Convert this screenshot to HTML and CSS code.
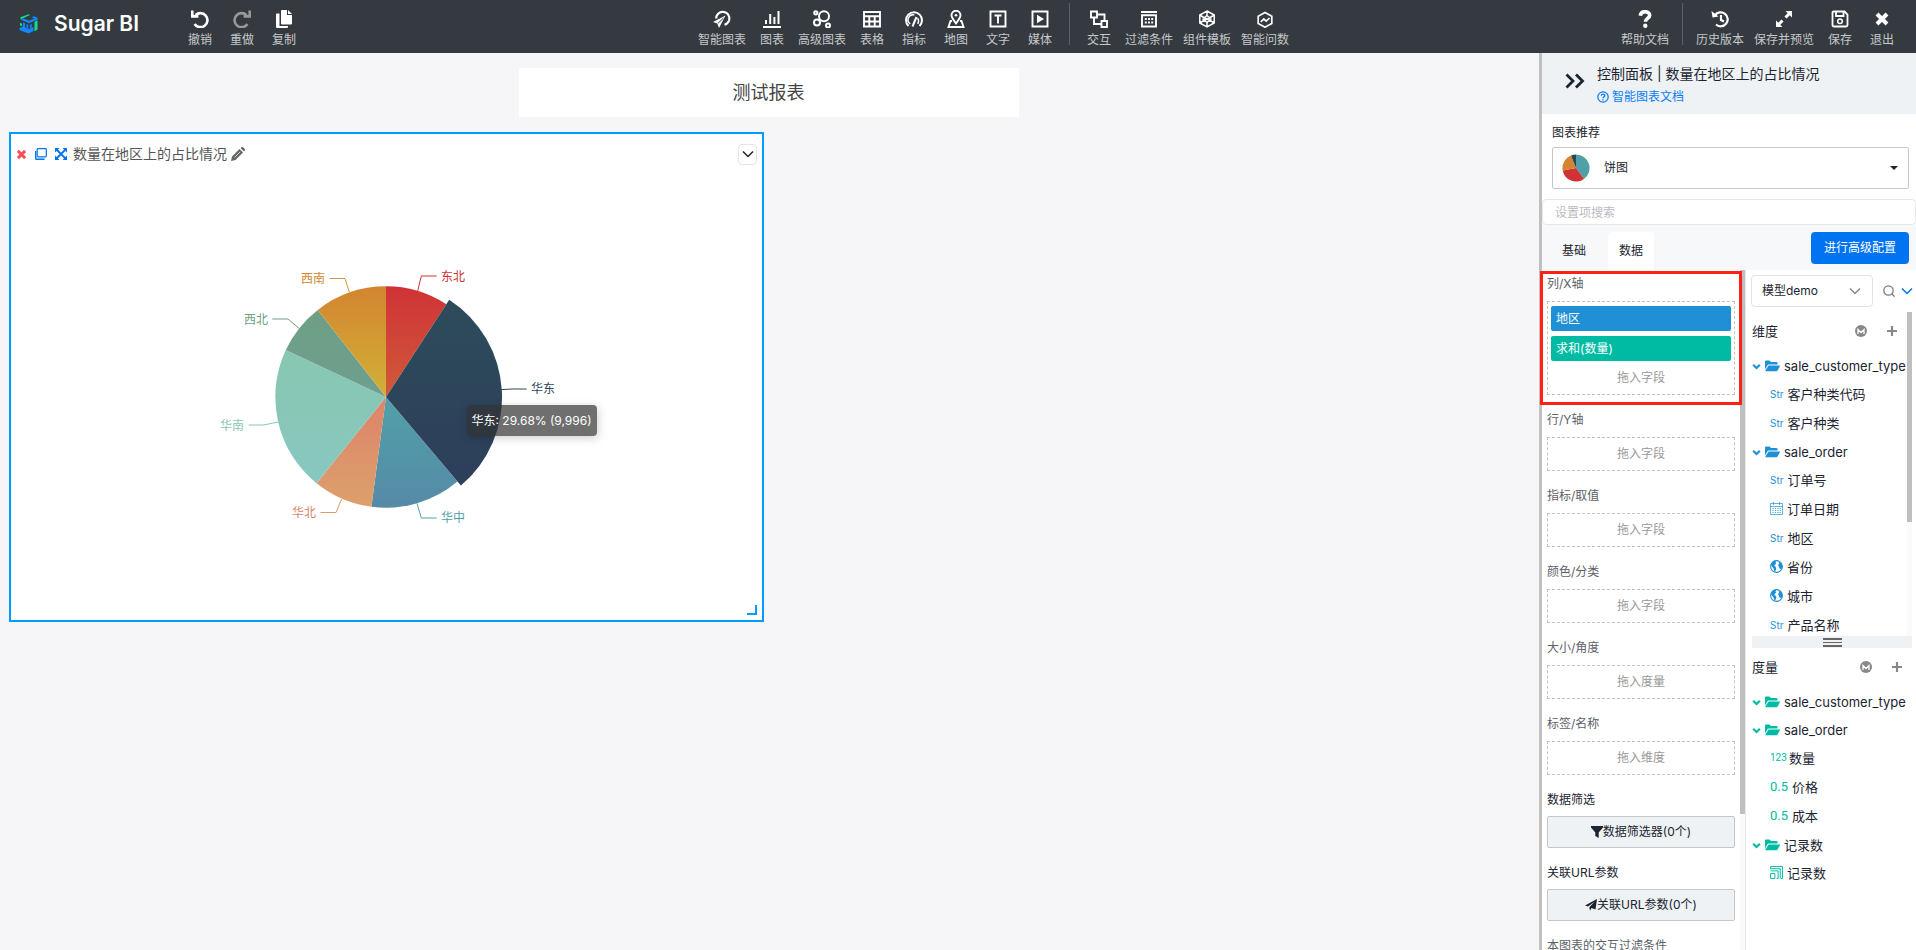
FILE: index.html
```html
<!DOCTYPE html>
<html lang="zh-CN">
<head>
<meta charset="utf-8">
<title>Sugar BI</title>
<link rel="stylesheet" href="styles.css">
</head>
<body>
<svg class="sprite" aria-hidden="true">
  <symbol id="undo" viewBox="0 0 18 18"><path d="M4.500 5.200A7 7 0 1 1 3.600 14" fill="none" stroke="currentColor" stroke-width="2.600"/><path d="M0 0.500h2.600v4.500h4.800v2.800H0z" fill="currentColor"/></symbol>
  <symbol id="copy" viewBox="0 0 18 18"><path d="M7 0h5v5h5v8.500a1 1 0 0 1-1 1H7a1 1 0 0 1-1-1V1a1 1 0 0 1 1-1zM13 0l4 4h-4zM2 3.500h2.500V16H13v1a1 1 0 0 1-1 1H2a1 1 0 0 1-1-1V4.500a1 1 0 0 1 1-1z" fill="currentColor"/></symbol>
  <symbol id="smart" viewBox="0 0 18 18"><path d="M3.200 8.500a6.600 6.600 0 1 1 8.300 6.300" fill="none" stroke="currentColor" stroke-width="2.200"/><path d="M12.500 5.500 0 12l4.300 1.500 1.700 4.500z" fill="currentColor"/><path d="M10.500 8 5 13.300" stroke="#343a40"/></symbol>
  <symbol id="bars" viewBox="0 0 18 18"><path d="M0 17h18M3 14V10M7.200 14V4M11.400 14V7M15.500 14V1" fill="none" stroke="currentColor" stroke-width="2"/></symbol>
  <symbol id="bubbles" viewBox="0 0 18 18"><g fill="none" stroke="currentColor" stroke-width="2"><circle cx="11" cy="6.200" r="5"/><circle cx="2.800" cy="2.800" r="1.600"/><circle cx="4" cy="12.500" r="3"/><circle cx="15" cy="15.500" r="2"/></g></symbol>
  <symbol id="grid" viewBox="0 0 18 18"><path d="M1 2h16v14.500H1zM1 6.200h16M1 11.500h16M6.300 6v10M11.700 6v10" fill="none" stroke="currentColor" stroke-width="1.900"/></symbol>
  <symbol id="gauge" viewBox="0 0 18 18"><path d="M3.500 16A8 8 0 1 1 14.500 16M7.500 16.500 11.500 7" fill="none" stroke="currentColor" stroke-width="2"/><path d="M5.300 14a5 5 0 0 1 4-9M12.700 8a6 6 0 0 1 0 6" fill="none" stroke="currentColor" stroke-width="1.400"/></symbol>
  <symbol id="map" viewBox="0 0 18 18"><path d="M9 13.500C6 9.500 4.500 7.500 4.500 5.300a4.500 4.500 0 0 1 9 0C13.500 7.500 12 9.500 9 13.500zM5 11H3.500L1.500 17h15l-2-6H13" fill="none" stroke="currentColor" stroke-width="1.900"/><circle cx="9" cy="5.200" r="1.300" fill="currentColor"/></symbol>
  <symbol id="text" viewBox="0 0 18 18"><path d="M1.500 1.500h15v15h-15zM5.500 5.500h7M9 5.500v8" fill="none" stroke="currentColor" stroke-width="1.900"/></symbol>
  <symbol id="play" viewBox="0 0 18 18"><path d="M1.500 1.500h15v15h-15z" fill="none" stroke="currentColor" stroke-width="1.900"/><path d="M6 4.800 13 9l-7 4.200z" fill="currentColor"/></symbol>
  <symbol id="link" viewBox="0 0 18 18"><path d="M1 1.500h6v6H1zM11.500 11h5.500v6h-5.500zM7 4.500h7.500V11M4 7.500V14h7.500" fill="none" stroke="currentColor" stroke-width="1.900"/></symbol>
  <symbol id="filterbox" viewBox="0 0 18 18"><path d="M1 2h16M2 5.200h14v11.300H2z" fill="none" stroke="currentColor" stroke-width="1.900"/><path d="M4.800 9h8.400M4.800 12.500h8.400" stroke="currentColor" stroke-width="1.900" stroke-dasharray="2 1.200"/></symbol>
  <symbol id="cube" viewBox="0 0 18 18"><path d="M9 1l7.200 4v8L9 17l-7.200-4V5zM9 1v4.500M9 12.500V17M1.800 5 9 9.500 16.200 5M1.800 13 9 8.500 16.200 13M9 5.500l4 3.500-4 3.500L5 9z" fill="none" stroke="currentColor" stroke-width="1.500"/></symbol>
  <symbol id="ask" viewBox="0 0 18 18"><path d="M9 2.500l6.800 3.700v7.300L9 17.200l-6.800-3.700V6.200zM4.800 12l3-3 2.400 2.200L13.500 8" fill="none" stroke="currentColor" stroke-width="1.700"/></symbol>
  <symbol id="question" viewBox="0 0 18 18"><path d="M4.300 5.800C4.700 2.900 6.800 1.700 9 1.700c2.700 0 4.700 1.400 4.700 3.500 0 3.300-4.300 3-4.300 6.600" fill="none" stroke="currentColor" stroke-width="3.600"/><circle cx="9.300" cy="15.800" r="2.200" fill="currentColor"/></symbol>
  <symbol id="history" viewBox="0 0 18 18"><path d="M4 5.200A7 7 0 1 1 5 14.500M10 5v5l3 1.500" fill="none" stroke="currentColor" stroke-width="2.200"/><path d="M0.500 1 1.500 7.500l6-1z" fill="currentColor"/></symbol>
  <symbol id="preview" viewBox="0 0 18 18"><path d="M10.500 1H17v6.500zM1 10.500V17h6.500z" fill="currentColor"/><path d="M15 3l-4.500 4.500M7.500 10.500 3 15" stroke="currentColor" stroke-width="3"/></symbol>
  <symbol id="save" viewBox="0 0 18 18"><path d="M2.500 1.500h11l3 3v10.500a1.500 1.500 0 0 1-1.500 1.500H3A1.500 1.500 0 0 1 1.500 15V2.500a1 1 0 0 1 1-1zM5 1.500V6h7.500V1.500" fill="none" stroke="currentColor" stroke-width="1.800"/><circle cx="9" cy="11.300" r="2.300" fill="none" stroke="currentColor" stroke-width="1.500"/></symbol>
  <symbol id="close" viewBox="0 0 18 18"><path d="M4 4l10 10M14 4 4 14" stroke="currentColor" stroke-width="4"/></symbol>
  <symbol id="expand" viewBox="0 0 12 12"><path d="M0 0h4.500L0 4.500zM12 0v4.500L7.500 0zM0 12V7.500L4.500 12zM12 12H7.500L12 7.500z" fill="currentColor"/><path d="M1.500 1.500l9 9M10.500 1.500l-9 9" stroke="currentColor" stroke-width="1.800"/></symbol>
  <symbol id="layers" viewBox="0 0 12 12"><path d="M3 .7h7.500a.8.800 0 0 1 .8.800V8a.8.800 0 0 1-.8.800H3a.8.800 0 0 1-.8-.8V1.500A.8.800 0 0 1 3 .7z" fill="none" stroke="currentColor" stroke-width="1.200"/><path d="M.7 3v7.500a.8.800 0 0 0 .8.800H9.500" fill="none" stroke="currentColor" stroke-width="1.400"/></symbol>
  <symbol id="pencil" viewBox="0 0 14 14"><path d="M0 14l1-4.500L8.500 2 12 5.500 4.500 13zM9.500 1l.7-.6a1.500 1.500 0 0 1 2 0L13.600 1.800a1.500 1.500 0 0 1 0 2L13 4.500z" fill="currentColor"/><path d="M3.500 10.500 9 5" stroke="#fff" stroke-width=".7"/></symbol>
  <symbol id="chev" viewBox="0 0 12 12"><path d="M1 3.500 6 8.500l5-5" fill="none" stroke="currentColor" stroke-width="1.500"/></symbol>
  <symbol id="chevbold" viewBox="0 0 10 10"><path d="M1.300 3 5 6.700 8.700 3" fill="none" stroke="currentColor" stroke-width="2.400"/></symbol>
  <symbol id="dbl" viewBox="0 0 20 16"><path d="M1.500 1.500 8 8l-6.500 6.500M11 1.500 17.500 8 11 14.500" fill="none" stroke="currentColor" stroke-width="2.800"/></symbol>
  <symbol id="help" viewBox="0 0 12 12"><circle cx="6" cy="6" r="5.200" fill="none" stroke="currentColor" stroke-width="1.200"/><path d="M4.200 4.800C4.300 2.500 7.800 2.500 7.800 4.600 7.800 5.900 6 5.900 6 7.200M6 8.200v1.300" fill="none" stroke="currentColor" stroke-width="1.300"/></symbol>
  <symbol id="folder" viewBox="0 0 15 12"><path d="M0 9.500V1.500A1 1 0 0 1 1 .5h3.500L6 2h5.500a1 1 0 0 1 1 1v1.500H4a2 2 0 0 0-1.700 1z" fill="currentColor"/><path d="M4 5.500h10.500c.5 0 .6.400.4.800l-2.300 4.200a1.500 1.500 0 0 1-1.200.8H.8c-.5 0-.6-.4-.4-.8L3 6.200A1.200 1.200 0 0 1 4 5.500z" fill="currentColor"/></symbol>
  <symbol id="cal" viewBox="0 0 13 13"><path d="M.5 1.500h12v11H.5zM.5 4.500h12M3.500 0v3M9.500 0v3" fill="none" stroke="currentColor" stroke-width=".7"/><path d="M2.500 6.500h8.500M2.500 8.500h8.500M2.500 10.500h8.500" stroke="currentColor" stroke-width=".8" stroke-dasharray="1.200 1.200"/></symbol>
  <symbol id="globe" viewBox="0 0 13 13"><circle cx="6.500" cy="6.500" r="5.900" fill="#fff" stroke="currentColor" stroke-width="1.100"/><path d="M.8 5C1.500 2 4 .5 6.500.6L5.500 2.500l.8 1-2 1.800L6 7.500l.3 1.500L5 12C4 11 4 9.500 3.500 8.500zM8.300 1l3.500 3 .6 3-1.200 2.500L9.500 8.500l-.7-2L8 5l1.200-1.500z" fill="currentColor"/></symbol>
  <symbol id="em" viewBox="0 0 12 12"><circle cx="6" cy="6" r="6" fill="currentColor"/><path d="M3 9V4.500l3 3 3-3V9" fill="none" stroke="#fff" stroke-width="1.300"/></symbol>
  <symbol id="plus" viewBox="0 0 10 10"><path d="M5 0v10M0 5h10" stroke="currentColor" stroke-width="2.200"/></symbol>
  <symbol id="search" viewBox="0 0 12 12"><circle cx="5.500" cy="5.500" r="4.700" fill="none" stroke="currentColor" stroke-width="1.200"/><path d="M9 9l2.700 2.700" stroke="currentColor" stroke-width="1.200"/></symbol>
  <symbol id="funnel" viewBox="0 0 12 12"><path d="M0 0h12v1.500L7.700 6.500v5.500L4.300 10V6.500L0 1.500z" fill="currentColor"/></symbol>
  <symbol id="plane" viewBox="0 0 12 12"><path d="M12 0 10.500 10.500 6.500 9 5 11.800 4.300 8.200 9.500 2.700 3 7.500 0 6.500z" fill="currentColor"/></symbol>
  <symbol id="count" viewBox="0 0 12 12"><path d="M.5 2.500v-2h11v11h-1.500M.5 4.500h7v7H6M.5 7h4v4.500h-4zM.5 2.500h9v9" fill="none" stroke="currentColor" stroke-width=".9"/></symbol>
</svg>

<header class="topbar">
  <a class="brand" href="#">
    <svg class="logo" viewBox="0 0 20 20" aria-hidden="true"><path d="M1.500 5.200v-2L9.500.2l1.500.8L4.500 4z" fill="#0fe28a"/><path d="M1 8.800l2 1v2.500l-2-1z" fill="#0fe28a"/><path d="M15.500 8 18.500 6.300V15.500l-3 1.800z" fill="#0fe28a"/><path d="M1.500 5.500 4 4.300l6 2.400 5.500-2.200-3-1.200L15 2.300l3.500 1.500v2L10 9.300z" fill="#1188ff"/><path d="M.5 14l3.500-1.500 6 2.500 4.500-2v4L9.500 19.600.5 16zM4 8.500l2 .8v4L4 12.500zM7.500 10l1.800.7v3.500l-1.800-.7zM11 10.700l1.800-.7v3.500l-1.800.7z" fill="#1188ff"/></svg>
    <span>Sugar BI</span>
  </a>
  <nav class="tools">
    <button class="tool"><svg><use href="#undo"/></svg>撤销</button>
    <button class="tool off"><svg class="flip"><use href="#undo"/></svg>重做</button>
    <button class="tool"><svg><use href="#copy"/></svg>复制</button>
  </nav>
  <nav class="tools mid">
    <button class="tool"><svg><use href="#smart"/></svg>智能图表</button>
    <button class="tool"><svg><use href="#bars"/></svg>图表</button>
    <button class="tool"><svg><use href="#bubbles"/></svg>高级图表</button>
    <button class="tool"><svg><use href="#grid"/></svg>表格</button>
    <button class="tool"><svg><use href="#gauge"/></svg>指标</button>
    <button class="tool"><svg><use href="#map"/></svg>地图</button>
    <button class="tool"><svg><use href="#text"/></svg>文字</button>
    <button class="tool"><svg><use href="#play"/></svg>媒体</button>
    <span class="rule"></span>
    <button class="tool"><svg><use href="#link"/></svg>交互</button>
    <button class="tool"><svg><use href="#filterbox"/></svg>过滤条件</button>
    <button class="tool"><svg><use href="#cube"/></svg>组件模板</button>
    <button class="tool"><svg><use href="#ask"/></svg>智能问数</button>
  </nav>
  <nav class="tools">
    <button class="tool"><svg><use href="#question"/></svg>帮助文档</button>
    <span class="rule"></span>
    <button class="tool"><svg><use href="#history"/></svg>历史版本</button>
    <button class="tool"><svg><use href="#preview"/></svg>保存并预览</button>
    <button class="tool"><svg><use href="#save"/></svg>保存</button>
    <button class="tool"><svg><use href="#close"/></svg>退出</button>
  </nav>
</header>

<div class="work">
  <main class="canvas">
    <h1 class="report-title">测试报表</h1>
    <section class="card">
      <div class="card-head">
        <button class="ic del" aria-label="删除"><svg><use href="#close"/></svg></button>
        <button class="ic" aria-label="复制"><svg><use href="#layers"/></svg></button>
        <button class="ic" aria-label="全屏"><svg><use href="#expand"/></svg></button>
        <h2>数量在地区上的占比情况</h2>
        <button class="ic pen" aria-label="编辑"><svg><use href="#pencil"/></svg></button>
        <button class="more" aria-label="更多"><svg><use href="#chev"/></svg></button>
      </div>
      <div class="chart">
        <svg class="pie" viewBox="-375 -223 751 446" role="img" aria-label="饼图">
          <defs>
            <linearGradient id="g1" x2="0" y2="1"><stop stop-color="#d03236"/><stop offset="1" stop-color="#cf5b39"/></linearGradient>
            <linearGradient id="g2" x2="0" y2="1"><stop stop-color="#2d4c5a"/><stop offset="1" stop-color="#2d3e5a"/></linearGradient>
            <linearGradient id="g3" x2="0" y2="1"><stop stop-color="#50a0a8"/><stop offset="1" stop-color="#568aa8"/></linearGradient>
            <linearGradient id="g4" x2="0" y2="1"><stop stop-color="#dd836b"/><stop offset="1" stop-color="#dda06b"/></linearGradient>
            <linearGradient id="g5" x2="0" y2="1"><stop stop-color="#88c7b0"/><stop offset="1" stop-color="#88c7c0"/></linearGradient>
            <linearGradient id="g6" x2="0" y2="1"><stop stop-color="#6e9f84"/><stop offset="1" stop-color="#6e9f90"/></linearGradient>
            <linearGradient id="g7" x2="0" y2="1"><stop stop-color="#d38530"/><stop offset="1" stop-color="#d1b137"/></linearGradient>
          </defs>
          <path fill="url(#g1)" d="M0 0V-110.700A110.700 110.700 0 0 1 60.300-92.800z"/>
          <path fill="url(#g3)" d="M0 0L71.500 84.500A110.700 110.700 0 0 1-14.600 109.700z"/>
          <path fill="url(#g4)" d="M0 0L-14.600 109.700A110.700 110.700 0 0 1-69.500 86.200z"/>
          <path fill="url(#g5)" d="M0 0L-69.500 86.200A110.700 110.700 0 0 1-100.200-47z"/>
          <path fill="url(#g6)" d="M0 0L-100.200-47A110.700 110.700 0 0 1-68.300-87.100z"/>
          <path fill="url(#g7)" d="M0 0L-68.300-87.100A110.700 110.700 0 0 1 0-110.700z"/>
          <path fill="url(#g2)" d="M0 0L63.200-97.300A116 116 0 0 1 74.900 88.600z"/>
          <g class="lines">
            <path stroke="#d03236" d="M31.600-105.700 35.300-121H50.600"/>
            <path stroke="#2d4558" d="M115.300-7.400 126-8H140.600"/>
            <path stroke="#50a0a8" d="M31 106.300 35.300 121H50.600"/>
            <path stroke="#dd9a6b" d="M-44.400 102-50 115.500H-65.400"/>
            <path stroke="#88c7b0" d="M-108 25-122.400 28H-137.400"/>
            <path stroke="#6e9f84" d="M-87-68.700-98-78H-113.700"/>
            <path stroke="#d39a30" d="M-36.700-105-41-118.500H-56.400"/>
          </g>
          <g class="names">
            <text x="55" y="-116" fill="#d03236">东北</text>
            <text x="145" y="-4" fill="#2d4558">华东</text>
            <text x="55" y="125" fill="#50a0a8">华中</text>
            <text x="-94" y="120" fill="#dd836b">华北</text>
            <text x="-166" y="33" fill="#88c7b0">华南</text>
            <text x="-142" y="-73" fill="#6e9f84">西北</text>
            <text x="-85" y="-114" fill="#d38530">西南</text>
          </g>
        </svg>
        <div class="tip">华东: 29.68% (9,996)</div>
      </div>
      <span class="grip"></span>
    </section>
  </main>

  <aside class="panel">
    <div class="panel-head">
      <button class="fold" aria-label="收起"><svg><use href="#dbl"/></svg></button>
      <div>
        <h2>控制面板 | 数量在地区上的占比情况</h2>
        <a href="#"><svg><use href="#help"/></svg>智能图表文档</a>
      </div>
    </div>
    <div class="rec">
      <label for="kind">图表推荐</label>
      <div class="kind">
        <svg class="mini" viewBox="-14 -14 28 28" aria-hidden="true"><path fill="#50a0a8" d="M0 0V-13.500A13.500 13.500 0 0 1 8 10.900z"/><path fill="#d03236" d="M0 0L8 10.900A13.500 13.500 0 0 1-13.300 2.500z"/><path fill="#d38530" d="M0 0L-13.300 2.500A13.500 13.500 0 0 1-5-12.500z"/><path fill="#2d4558" d="M0 0L-5-12.500A13.500 13.500 0 0 1 0-13.500z"/></svg>
        <select id="kind"><option>饼图</option></select>
        <span class="caret"></span>
      </div>
    </div>
    <input class="find" type="text" placeholder="设置项搜索" aria-label="设置项搜索">
    <div class="tabs">
      <button class="tab">基础</button>
      <button class="tab on">数据</button>
      <button class="primary">进行高级配置</button>
    </div>
    <div class="cols">
      <div class="fields">
        <div class="field-list">
          <section><h3>列/X轴</h3><div class="drop full"><span class="chip">地区</span><span class="chip green">求和(数量)</span><p>拖入字段</p></div></section>
          <section><h3>行/Y轴</h3><div class="drop">拖入字段</div></section>
          <section><h3>指标/取值</h3><div class="drop">拖入字段</div></section>
          <section><h3>颜色/分类</h3><div class="drop">拖入字段</div></section>
          <section><h3>大小/角度</h3><div class="drop">拖入度量</div></section>
          <section><h3>标签/名称</h3><div class="drop">拖入维度</div></section>
          <section class="act"><h3>数据筛选</h3><button><svg><use href="#funnel"/></svg>数据筛选器(0个)</button></section>
          <section class="act"><h3>关联URL参数</h3><button><svg><use href="#plane"/></svg>关联URL参数(0个)</button></section>
          <section><h3>本图表的交互过滤条件</h3></section>
        </div>
        <div class="bar"><i></i></div>
        <div class="mark"></div>
      </div>
      <div class="model">
        <div class="model-top">
          <div class="model-pick"><select aria-label="模型"><option>模型demo</option></select><svg><use href="#chev"/></svg></div>
          <button class="ic find-btn" aria-label="搜索"><svg><use href="#search"/></svg></button>
          <button class="ic drop-btn" aria-label="展开"><svg><use href="#chev"/></svg></button>
        </div>
        <div class="dims">
          <div class="tree">
            <div class="tree-head"><h3>维度</h3><button class="ic" aria-label="计算"><svg><use href="#em"/></svg></button><button class="ic add" aria-label="添加"><svg><use href="#plus"/></svg></button></div>
            <ul>
              <li class="dir"><svg class="tw"><use href="#chevbold"/></svg><svg class="fd"><use href="#folder"/></svg>sale_customer_type</li>
              <li><b>Str</b>客户种类代码</li>
              <li><b>Str</b>客户种类</li>
              <li class="dir"><svg class="tw"><use href="#chevbold"/></svg><svg class="fd"><use href="#folder"/></svg>sale_order</li>
              <li><b>Str</b>订单号</li>
              <li><svg class="lf"><use href="#cal"/></svg>订单日期</li>
              <li><b>Str</b>地区</li>
              <li><svg class="lf"><use href="#globe"/></svg>省份</li>
              <li><svg class="lf"><use href="#globe"/></svg>城市</li>
              <li><b>Str</b>产品名称</li>
            </ul>
          </div>
          <div class="bar short"><i></i></div>
        </div>
        <div class="split"><span></span></div>
        <div class="tree measures">
          <div class="tree-head"><h3>度量</h3><button class="ic" aria-label="计算"><svg><use href="#em"/></svg></button><button class="ic add" aria-label="添加"><svg><use href="#plus"/></svg></button></div>
          <ul>
            <li class="dir"><svg class="tw"><use href="#chevbold"/></svg><svg class="fd"><use href="#folder"/></svg>sale_customer_type</li>
            <li class="dir"><svg class="tw"><use href="#chevbold"/></svg><svg class="fd"><use href="#folder"/></svg>sale_order</li>
            <li class="num"><b class="int">123</b>数量</li>
            <li><b class="dec">0.5</b>价格</li>
            <li><b class="dec">0.5</b>成本</li>
            <li class="dir"><svg class="tw"><use href="#chevbold"/></svg><svg class="fd"><use href="#folder"/></svg>记录数</li>
            <li><svg class="lf"><use href="#count"/></svg>记录数</li>
          </ul>
        </div>
      </div>
    </div>
  </aside>
</div>
</body>
</html>
```
FILE: styles.css
```css
* { box-sizing: border-box; }
body {
  margin: 0;
  height: 100vh;
  display: flex;
  flex-direction: column;
  overflow: hidden;
  background: #f6f6f9;
  color: #1b2430;
  font: 12px/18px Inter, "Noto Sans CJK SC", sans-serif;
}
h1, h2, h3, p, ul { margin: 0; padding: 0; font-weight: 400; list-style: none; }
button, input, select { font: inherit; color: inherit; margin: 0; }
button { padding: 0; border: 0; background: none; cursor: pointer; }
select { appearance: none; }
a { text-decoration: none; }
svg { display: block; flex: none; }
.sprite { position: absolute; width: 0; height: 0; }

.topbar {
  flex: none;
  height: 53px;
  display: flex;
  justify-content: space-between;
  padding: 0 13px 0 19px;
  background: #343a40;
  color: #fff;
}
.brand { display: flex; align-items: center; gap: 15px; width: 160px; padding-bottom: 5px; color: #fff; font-size: 21px; font-weight: 600; }
.logo { width: 20px; height: 20px; }
.tools { display: flex; }
.mid { flex: 1; justify-content: center; padding-left: 66px; }
.tool {
  min-width: 42px;
  padding: 7px 5px 0;
  display: flex;
  flex-direction: column;
  align-items: center;
  gap: 3px;
  line-height: 18px;
  white-space: nowrap;
  color: #c6c8ca;
}
.tool svg { width: 18px; height: 18px; margin-top: 3px; color: #fff; }
.tool.off svg { color: #999; }
.flip { transform: scaleX(-1); }
.rule { width: 1px; height: 42px; margin: 3px 8px 0; background: #5d6267; }

.work { flex: 1; min-height: 0; display: flex; }
.canvas { flex: 1; min-width: 0; padding: 15px 11px 15px 9px; }
.report-title {
  width: 500px;
  margin: 0 auto 15px;
  background: #fff;
  font-size: 18px;
  line-height: 49px;
  text-align: center;
  color: #444;
}
.card { position: relative; width: 755px; border: 2px solid #009cff; background: #fff; }
.card-head { display: flex; align-items: center; height: 40px; padding: 0 5px 0 2px; color: #0073f1; }
.card-head h2 { margin-left: 2px; font-size: 14px; line-height: 20px; color: #555; }
.ic { display: grid; place-items: center; width: 20px; height: 20px; }
.ic svg { width: 12px; height: 12px; }
.del { width: 16px; margin-right: 2px; color: #ff4d58; }
.del svg { width: 13px; height: 13px; }
.pen { margin-left: 1px; color: #666; }
.pen svg { width: 14px; height: 14px; }
.more { display: grid; place-items: center; width: 19px; height: 21px; margin-left: auto; border: 1px solid #e2e4e6; border-radius: 4px; color: #1b2430; }
.more svg { width: 12px; height: 12px; }
.chart { position: relative; }
.pie { width: 100%; }
.lines { fill: none; }
.names { font-size: 12px; }
.tip {
  position: absolute;
  left: calc(50% + 80px);
  top: calc(50% + 8px);
  padding: 0 5px;
  line-height: 31px;
  border-radius: 4px;
  background: rgba(50, 50, 50, .7);
  color: #fff;
  white-space: nowrap;
  box-shadow: 1px 2px 10px rgba(0, 0, 0, .2);
}
.grip { position: absolute; right: 5px; bottom: 5px; width: 10px; height: 10px; border: solid #009cff; border-width: 0 2px 2px 0; }

.panel { width: 377px; display: flex; flex-direction: column; border-left: 3px solid #c0c0c0; background: #fff; }
.panel-head { display: flex; align-items: flex-start; gap: 12px; height: 61px; padding: 10px 0 0 23px; background: #eef2f4; }
.panel-head h2 { font-size: 14px; line-height: 22px; }
.panel-head a { display: flex; align-items: center; gap: 3px; line-height: 24px; color: #0a7cf5; }
.panel-head a svg { width: 12px; height: 12px; }
.fold { padding-top: 10px; }
.fold svg { width: 20px; height: 16px; }
.rec { padding: 10px 7px 10px 10px; }
.rec label { display: block; margin-bottom: 5px; }
.kind { display: grid; align-items: center; }
.kind > * { grid-area: 1 / 1; }
.mini { width: 28px; height: 28px; margin-left: 10px; z-index: 1; }
.kind select { width: 100%; height: 42px; padding: 0 51px; border: 1px solid #c4c6c8; border-radius: 2px; background: #fff; }
.caret { justify-self: end; margin-right: 11px; border: solid transparent; border-width: 4px 4px 0; border-top-color: #1b2430; }
.find { flex: none; height: 26px; padding: 0 12px; border: 1px solid #e4e6e8; border-radius: 4px; outline: 0; background: #fff; }
.find::placeholder { color: #b8bbbf; opacity: 1; }
.tabs { display: flex; align-items: flex-end; gap: 11px; padding: 7px 7px 0 9px; background: #f6f8fa; }
.tab { height: 38px; padding: 0 11px; border-radius: 4px 4px 0 0; }
.tab.on { background: #fff; }
.primary { align-self: flex-start; height: 32px; margin-left: auto; padding: 0 13px; border-radius: 4px; background: #0073f1; color: #fff; }

.cols { flex: 1; min-height: 0; display: flex; }
.fields { position: relative; display: flex; width: 203px; }
.field-list { flex: 1; padding: 5px; overflow: hidden; }
.field-list section { margin-bottom: 16px; }
.field-list h3 { margin-bottom: 8px; color: #5c6167; font-size: 12px; line-height: 18px; }
.drop { border: 1px dashed #c4c4c4; line-height: 32px; text-align: center; color: #999; }
.full { display: grid; gap: 5px; padding: 4px 3px; }
.full p { line-height: 24px; }
.chip { padding: 0 5px; line-height: 25px; border-radius: 2px; background: #1f90d6; color: #fff; text-align: left; }
.green { background: #00bba4; }
.act h3 { margin-bottom: 7px; color: #1b2430; }
.field-list button { display: flex; align-items: center; justify-content: center; width: 100%; height: 32px; border: 1px solid #c4c6c8; border-radius: 2px; background: #eef2f4; }
.field-list button svg { width: 12px; height: 12px; }
.bar { width: 5px; background: #fafafa; }
.bar i { display: block; height: 80%; background: #bfbfbf; }
.mark { position: absolute; left: -2px; top: 1px; width: 202px; height: 134px; border: 3px solid #ff2116; pointer-events: none; }

.model { flex: 1; min-width: 0; display: flex; flex-direction: column; padding: 0 4px 0 6px; border-left: 1px solid #e8e8e8; }
.model-top { display: flex; align-items: center; height: 42px; margin: 0 -4px 0 -1px; }
.model-top > * { flex: none; }
.model-pick { display: grid; align-items: center; width: 122px; }
.model-pick > * { grid-area: 1 / 1; }
.model-pick select { width: 100%; height: 32px; padding: 0 10px; border: 1px solid #e0e3e6; border-radius: 4px; background: #fff; }
.model-pick svg { width: 12px; height: 12px; justify-self: end; margin-right: 12px; color: #888; pointer-events: none; }
.find-btn { margin-left: 6px; color: #777; }
.drop-btn { width: 16px; color: #0073f1; }
.dims { display: flex; height: 324px; }
.tree { flex: 1; min-width: 0; overflow: hidden; color: #1f90d6; }
.tree-head { display: flex; align-items: center; height: 40px; padding-bottom: 2px; color: #888; }
.tree-head h3 { flex: 1; font-size: 13px; color: #1b2430; }
.add { margin: 0 5px 0 11px; }
.add svg { width: 10px; height: 10px; }
.tree li { display: flex; align-items: center; gap: 4px; height: 29px; padding: 0 0 2px 18px; font-size: 13px; white-space: nowrap; color: #1b2430; }
.tree li.dir { height: 28px; padding: 0; }
.tree b { min-width: 13px; font: 10px Inter, sans-serif; color: #1f90d6; }
.tree li svg { color: #1f90d6; }
.tw { width: 9px; height: 9px; }
.fd { width: 15px; height: 12px; }
.lf { width: 13px; height: 13px; }
.short i { height: 210px; }
.split { display: grid; place-items: center; height: 12px; background: #eef2f4; }
.split span { width: 19px; height: 9px; border: solid #666; border-width: 2px 0; background: linear-gradient(#666, #666) center / 100% 1px no-repeat; }
.measures { flex: none; }
.measures li b, .measures li svg { color: #00bba4; }
.tree li.num { gap: 2px; }
.tree b.int { font: 10px Roboto, sans-serif; }
.tree b.dec { font: 13px Roboto, sans-serif; }
```
